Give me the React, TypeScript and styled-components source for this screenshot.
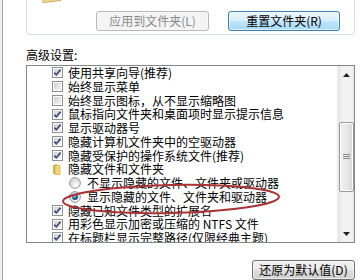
import React from "react";
import styled, { createGlobalStyle } from "styled-components";

const GlobalStyle = createGlobalStyle`
  html, body { margin: 0; padding: 0; background: #ffffff; }
  body {
    font-family: "Noto Sans CJK SC", "Noto Sans", sans-serif;
    font-size: 12px;
    color: #000;
  }
  * { box-sizing: border-box; }
`;

type Kind = "check" | "uncheck" | "folder" | "radio" | "radioOn";
type Item = { kind: Kind; text: string };

const items: Item[] = [
  { kind: "check", text: "使用共享向导(推荐)" },
  { kind: "uncheck", text: "始终显示菜单" },
  { kind: "uncheck", text: "始终显示图标，从不显示缩略图" },
  { kind: "check", text: "鼠标指向文件夹和桌面项时显示提示信息" },
  { kind: "check", text: "显示驱动器号" },
  { kind: "check", text: "隐藏计算机文件夹中的空驱动器" },
  { kind: "check", text: "隐藏受保护的操作系统文件(推荐)" },
  { kind: "folder", text: "隐藏文件和文件夹" },
  { kind: "radio", text: "不显示隐藏的文件、文件夹或驱动器" },
  { kind: "radioOn", text: "显示隐藏的文件、文件夹和驱动器" },
  { kind: "check", text: "隐藏已知文件类型的扩展名" },
  { kind: "check", text: "用彩色显示加密或压缩的 NTFS 文件" },
  { kind: "check", text: "在标题栏显示完整路径(仅限经典主题)" },
];

const Window = styled.div`
  position: relative;
  width: 360px;
  height: 280px;
  overflow: hidden;
  display: flex;
  background: #fff;
`;

const EdgeFrame = styled.div`
  flex: none;
  width: 3px;
  background: #eef0f2;
  border-right: 1px solid #9fa6ad;
`;

const Content = styled.div`
  flex: 1;
  display: flex;
  flex-direction: column;
  padding: 0 5px 0 23px;
`;

const GroupBox = styled.div`
  flex: none;
  height: 40px;
  margin-top: -5px;
  border: 1px solid #d5dfe5;
  border-radius: 3px;
  display: flex;
  align-items: flex-start;
  gap: 19px;
  padding: 15px 14px 0 13px;
`;

const TopFolder = styled.svg`
  flex: none;
  margin-top: -24px;
  margin-right: auto;
`;

const Button = styled.button<{ $variant: "disabled" | "hot" | "normal"; $w: number }>`
  flex: none;
  width: ${(p) => p.$w}px;
  height: 20px;
  padding: 0;
  font-family: "Noto Sans CJK SC", "Noto Sans", sans-serif;
  font-size: 12px;
  line-height: 18px;
  border-radius: 3px;
  text-align: center;
  white-space: nowrap;
  color: ${(p) => (p.$variant === "disabled" ? "#8a8a8a" : "#000")};
  border: 1px solid
    ${(p) =>
      p.$variant === "disabled" ? "#b5b9bc" : p.$variant === "hot" ? "#3c7fb1" : "#707070"};
  background: ${(p) =>
    p.$variant === "disabled"
      ? "#f4f4f4"
      : p.$variant === "hot"
      ? "linear-gradient(to bottom, #eaf6fd 0%, #d9f0fc 48%, #bee6fd 52%, #a7d9f5 100%)"
      : "linear-gradient(to bottom, #f2f2f2 0%, #ebebeb 48%, #dddddd 52%, #cfcfcf 100%)"};
  box-shadow: inset 0 0 0 1px
    ${(p) => (p.$variant === "disabled" ? "#f8f8f8" : "rgba(255,255,255,0.6)")};
`;

const SectionLabel = styled.div`
  margin-top: 12px;
  line-height: 16px;
  height: 16px;
`;

const ListBox = styled.div`
  margin-top: 2px;
  height: 178px;
  border: 1px solid #828790;
  display: flex;
`;

const Items = styled.div`
  flex: 1;
  overflow: hidden;
  padding-left: 25px;
`;

const Row = styled.div<{ $indent: number }>`
  display: flex;
  align-items: center;
  height: 13.75px;
  padding-left: ${(p) => p.$indent}px;
  gap: ${(p) => (p.$indent ? 6 : 5)}px;
  white-space: nowrap;
`;

const RowText = styled.span`
  line-height: 13.75px;
`;

const ScrollBar = styled.div`
  flex: none;
  width: 17px;
  display: flex;
  flex-direction: column;
  background: linear-gradient(to right, #e6e6e6 0%, #f2f2f2 30%, #f2f2f2 80%, #ececec 100%);
  border-left: 1px solid #ececec;
`;

const ArrowButton = styled.div`
  flex: none;
  height: 17px;
  display: flex;
  align-items: center;
  justify-content: center;
`;

const Track = styled.div`
  flex: 1;
  display: flex;
  flex-direction: column;
  align-items: center;
`;

const Thumb = styled.div`
  margin-top: 39px;
  width: 15px;
  height: 70px;
  border: 1px solid #9a9a9a;
  border-radius: 2px;
  background: linear-gradient(to right, #f3f3f3 0%, #e8e8e8 50%, #d6d6d6 100%);
  box-shadow: inset 0 0 0 1px #fbfbfb;
  display: flex;
  align-items: center;
  justify-content: center;
`;

const Footer = styled.div`
  margin-top: 17px;
  display: flex;
  justify-content: flex-end;
`;

const Annotation = styled.svg`
  position: absolute;
  left: 61px;
  top: 183px;
  pointer-events: none;
`;

const CheckBox = ({ on }: { on: boolean }) => (
  <svg width="11" height="11" viewBox="0 0 11 11">
    <defs>
      <linearGradient id="cbg" x1="0" y1="0" x2="1" y2="1">
        <stop offset="0" stopColor="#cfcfcf" />
        <stop offset="1" stopColor="#f7f7f7" />
      </linearGradient>
    </defs>
    <rect x="0.5" y="0.5" width="10" height="10" fill="#fff" stroke="#8e8f8f" />
    <rect x="2" y="2" width="7" height="7" fill="url(#cbg)" />
    {on && (
      <path d="M2.3 5.6 L4.3 7.8 L8.6 2.6" fill="none" stroke="#3d4e7a" strokeWidth="1.7" />
    )}
  </svg>
);

const Radio = ({ on }: { on: boolean }) => (
  <svg width="12" height="12" viewBox="0 0 12 12">
    <defs>
      <radialGradient id="rg" cx="0.6" cy="0.7" r="0.7">
        <stop offset="0" stopColor="#ffffff" />
        <stop offset="1" stopColor="#cfcfcf" />
      </radialGradient>
      <radialGradient id="rd" cx="0.4" cy="0.35" r="0.7">
        <stop offset="0" stopColor="#8fd0f0" />
        <stop offset="0.55" stopColor="#2a6a9a" />
        <stop offset="1" stopColor="#183858" />
      </radialGradient>
    </defs>
    <circle cx="6" cy="6" r="5.4" fill="url(#rg)" stroke="#8e8f8f" strokeWidth="0.9" />
    {on && <circle cx="6" cy="6" r="3" fill="url(#rd)" />}
  </svg>
);

const SmallFolder = () => (
  <svg width="11" height="12" viewBox="0 0 11 12">
    <path d="M1 2 L5 1 L5 11 L1 11 Z" fill="#d9b64e" />
    <path d="M3 3 L8 2 L8 11.5 L3 11.5 Z" fill="#f1d677" stroke="#c9a440" strokeWidth="0.6" />
  </svg>
);

const Indicator = ({ kind }: { kind: Kind }) => {
  if (kind === "folder") return <SmallFolder />;
  if (kind === "radio" || kind === "radioOn") return <Radio on={kind === "radioOn"} />;
  return <CheckBox on={kind === "check"} />;
};

export default function App() {
  return (
    <>
      <GlobalStyle />
      <Window>
        <EdgeFrame />
        <Content>
          <GroupBox>
            <TopFolder width="23" height="16" viewBox="0 0 23 16">
              <path d="M1 0 L22 0 L21 13 L2 15 Z" fill="#ecd58c" />
              <path d="M2 15 L21 13 L21 14 L3 16 Z" fill="#c9a851" />
            </TopFolder>
            <Button $variant="disabled" $w={113} disabled>
              应用到文件夹(L)
            </Button>
            <Button $variant="hot" $w={112}>
              重置文件夹(R)
            </Button>
          </GroupBox>
          <SectionLabel>高级设置:</SectionLabel>
          <ListBox>
            <Items>
              {items.map((it, i) => (
                <Row key={i} $indent={it.kind === "radio" || it.kind === "radioOn" ? 17 : 0}>
                  <Indicator kind={it.kind} />
                  <RowText>{it.text}</RowText>
                </Row>
              ))}
            </Items>
            <ScrollBar>
              <ArrowButton>
                <svg width="7" height="4" viewBox="0 0 7 4">
                  <path d="M0 4 L3.5 0 L7 4 Z" fill="#222" />
                </svg>
              </ArrowButton>
              <Track>
                <Thumb>
                  <svg width="7" height="6" viewBox="0 0 7 6">
                    <path d="M0 0.5 H7 M0 2.5 H7 M0 4.5 H7" stroke="#8a8a8a" strokeWidth="1" />
                  </svg>
                </Thumb>
              </Track>
              <ArrowButton>
                <svg width="7" height="4" viewBox="0 0 7 4">
                  <path d="M0 0 L7 0 L3.5 4 Z" fill="#222" />
                </svg>
              </ArrowButton>
            </ScrollBar>
          </ListBox>
          <Footer>
            <Button $variant="normal" $w={103}>
              还原为默认值(D)
            </Button>
          </Footer>
        </Content>
        <Annotation width="220" height="32" viewBox="0 0 220 32">
          <ellipse
            cx="110"
            cy="16"
            rx="108"
            ry="14"
            fill="none"
            stroke="#aa3232"
            strokeWidth="2"
            transform="rotate(-1.2 110 16)"
          />
        </Annotation>
      </Window>
    </>
  );
}
